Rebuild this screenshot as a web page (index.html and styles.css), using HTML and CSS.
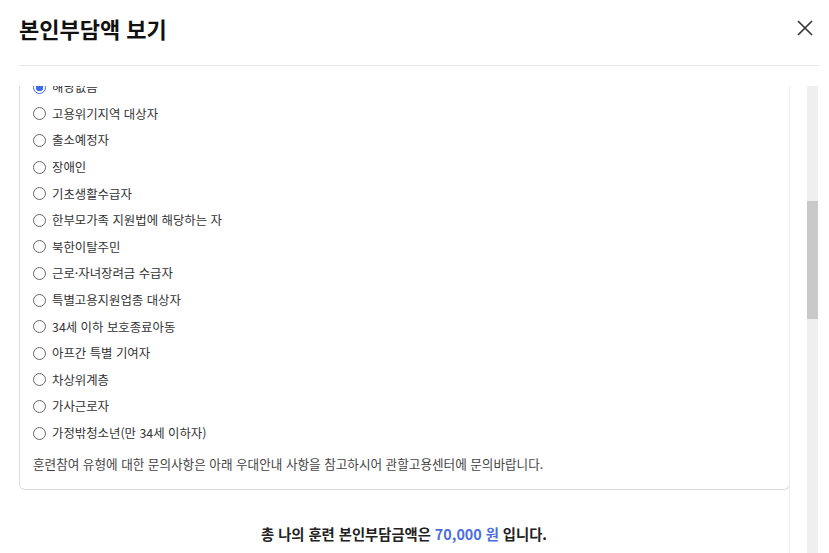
FILE: index.html
```html
<!DOCTYPE html>
<html lang="ko">
<head>
<meta charset="utf-8">
<link rel="stylesheet" href="styles.css">
</head>
<body>
<div class="modal">
  <div class="header">
    <h1 class="title">본인부담액 보기</h1>
    <svg class="close" width="16" height="16" viewBox="0 0 16 16"><path d="M1 1L15 15M15 1L1 15" stroke="#333" stroke-width="1.6" fill="none"/></svg>
  </div>
  <div class="scroll">
    <div class="content">
      <div class="inner">
        <div class="box">
          <ul class="list">
            <li class="item"><span class="radio checked"></span>해당없음</li>
            <li class="item"><span class="radio"></span>고용위기지역 대상자</li>
            <li class="item"><span class="radio"></span>출소예정자</li>
            <li class="item"><span class="radio"></span>장애인</li>
            <li class="item"><span class="radio"></span>기초생활수급자</li>
            <li class="item"><span class="radio"></span>한부모가족 지원법에 해당하는 자</li>
            <li class="item"><span class="radio"></span>북한이탈주민</li>
            <li class="item"><span class="radio"></span>근로·자녀장려금 수급자</li>
            <li class="item"><span class="radio"></span>특별고용지원업종 대상자</li>
            <li class="item"><span class="radio"></span>34세 이하 보호종료아동</li>
            <li class="item"><span class="radio"></span>아프간 특별 기여자</li>
            <li class="item"><span class="radio"></span>차상위계층</li>
            <li class="item"><span class="radio"></span>가사근로자</li>
            <li class="item"><span class="radio"></span>가정밖청소년(만 34세 이하자)</li>
          </ul>
          <p class="note">훈련참여 유형에 대한 문의사항은 아래 우대안내 사항을 참고하시어 관할고용센터에 문의바랍니다.</p>
        </div>
        <p class="summary">총 나의 훈련 본인부담금액은 <span class="amount">70,000 원</span> 입니다.</p>
      </div>
    </div>
    <div class="scrollbar"><div class="thumb"></div></div>
  </div>
</div>
</body>
</html>
```
FILE: styles.css
```css
html, body {
  margin: 0;
  padding: 0;
  background: #fff;
  height: 553px;
  overflow: hidden;
}
body {
  font-family: "Noto Sans CJK KR", "Noto Sans", sans-serif;
  color: #333;
}
.modal {
  padding: 0 10px 0 19px;
}
.header {
  height: 66px;
  box-sizing: border-box;
  padding-bottom: 9px;
  border-bottom: 1px solid #e6e6e6;
  display: flex;
  align-items: center;
  justify-content: space-between;
}
.title {
  margin: 0;
  font-size: 22px;
  font-weight: 700;
  color: #111;
  letter-spacing: 0;
}
.close {
  margin-right: 6px;
  display: block;
}
.scroll {
  margin-top: 20px;
  height: 467px;
  display: flex;
  gap: 17px;
}
.content {
  width: 770px;
  border-right: 1px solid #efefef;
  overflow: hidden;
}
.inner {
  margin-top: -12px;
}
.box {
  border: 1px solid #dcdcdc;
  border-top: none;
  border-radius: 0 0 6px 6px;
  padding: 0 13px 16px 13px;
  margin-right: -1px;
}
.list {
  list-style: none;
  margin: 0;
  padding: 0;
}
.item {
  height: 26.6px;
  display: flex;
  align-items: center;
  font-size: 12.4px;
  color: #333;
}
.radio {
  width: 11px;
  height: 11px;
  border: 1px solid #666;
  border-radius: 50%;
  margin-right: 6px;
  flex: none;
  box-sizing: content-box;
}
.radio.checked {
  border-color: #3a6de6;
  background: radial-gradient(circle, #3a6de6 0 3.5px, #fff 4px);
}
.note {
  margin: 8.5px 0 0;
  font-size: 12.6px;
  line-height: 18px;
  color: #444;
}
.summary {
  margin: 34px 0 0;
  text-align: center;
  font-size: 14.3px;
  line-height: 20px;
  font-weight: 700;
  color: #222;
}
.amount {
  color: #4a6ee0;
}
.scrollbar {
  width: 11px;
  height: 100%;
  background: #efefef;
  padding-top: 115px;
  box-sizing: border-box;
}
.thumb {
  height: 118px;
  background: #c9c9c9;
}
```
